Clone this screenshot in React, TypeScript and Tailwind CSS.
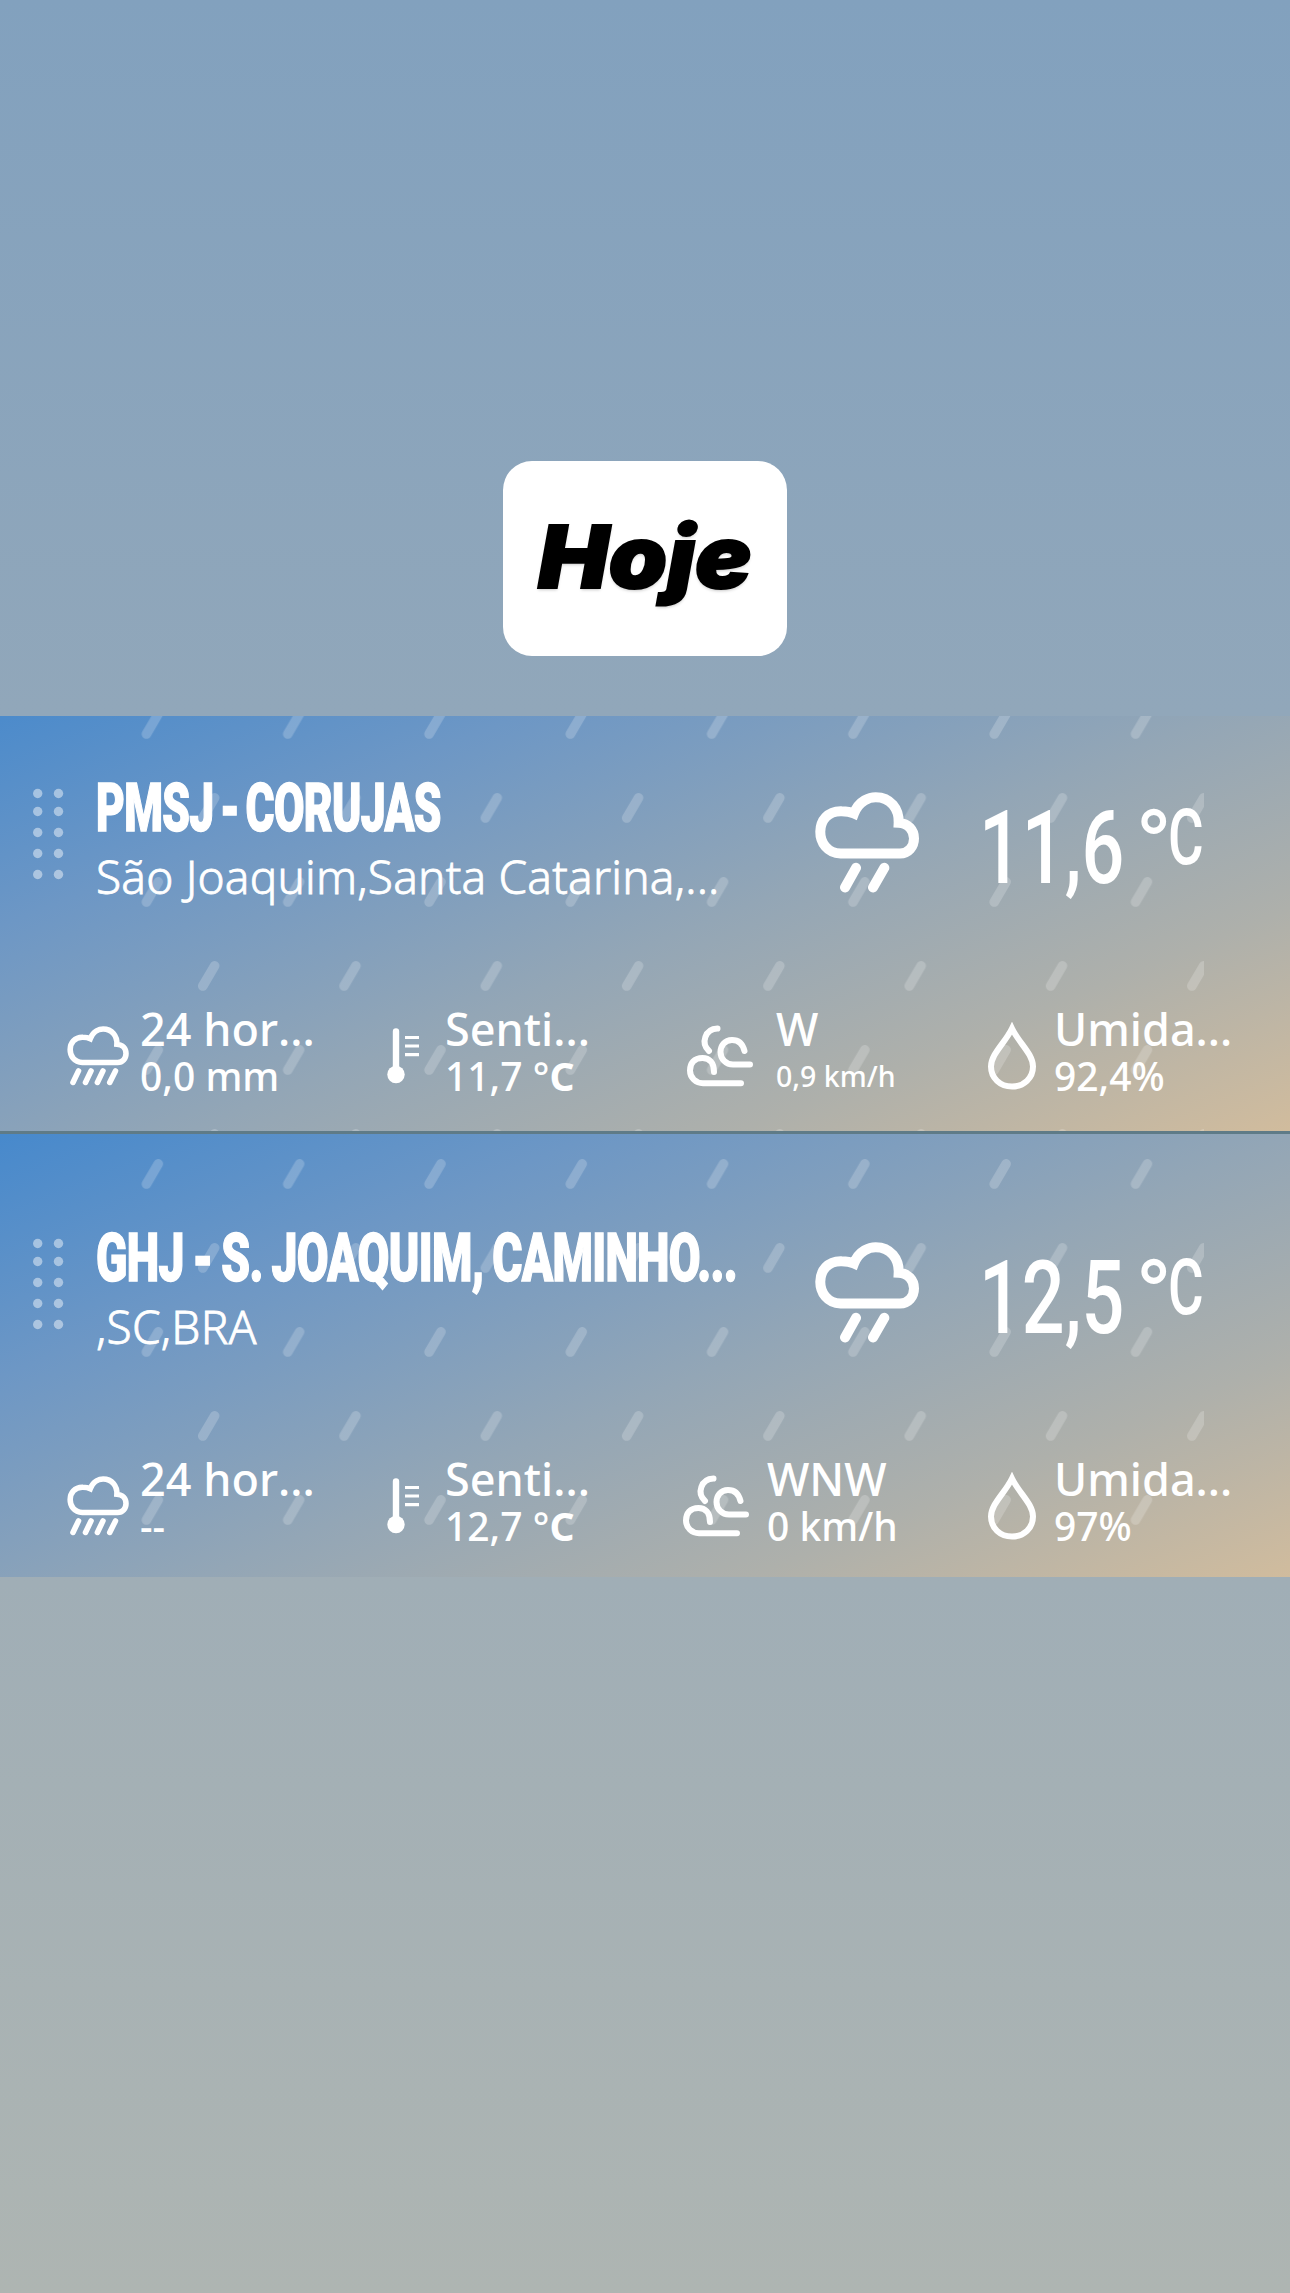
import type { ReactNode } from "react";
import clsx from "clsx";

const CLOUD =
  "M77 184C-5 181 -5 54 80 57Q102 57 117 64C132 24 165 15 182 15C226 15 253 50 251 92C280 94 297 114 297 139C297 164 280 184 255 184Z";

function RainPattern({ id }: { id: string }) {
  return (
    <svg className="absolute inset-0" width="1290" height="447">
      <defs>
        <pattern
          id={id}
          x="0"
          y="25"
          width="141.3"
          height="168"
          patternUnits="userSpaceOnUse"
        >
          <path
            d="M5.2 25L17 4.8M61.5 109L73.3 88.8"
            stroke="#fff"
            strokeOpacity="0.2"
            strokeWidth="9.6"
            strokeLinecap="round"
          />
        </pattern>
      </defs>
      <rect x="86" y="25" width="1118" height="422" fill={`url(#${id})`} />
    </svg>
  );
}

function DragHandle() {
  return (
    <svg className="mt-[10px] shrink-0" width="31" height="92">
      {[5.5, 23.5, 44.5, 65.5, 86.5].map((y) => (
        <g key={y} fill="#fff" fillOpacity="0.46">
          <circle cx="4.7" cy={y} r="4.7" />
          <circle cx="25.5" cy={y} r="4.7" />
        </g>
      ))}
    </svg>
  );
}

function RainCloud() {
  return (
    <svg
      className="mt-[14px] shrink-0"
      width="104"
      height="101"
      viewBox="0 0 312 302"
      fill="none"
      stroke="#fff"
      strokeWidth="30"
      strokeLinecap="round"
    >
      <path d={CLOUD} />
      <path d="M90 286L123 227M174 286L208 227" />
    </svg>
  );
}

function PrecipitationIcon() {
  return (
    <svg
      className="mt-[21px] shrink-0"
      width="62"
      height="60"
      viewBox="0 0 312 302"
      fill="none"
      stroke="#fff"
      strokeWidth="28"
      strokeLinecap="round"
    >
      <path d={CLOUD} />
      <path d="M30 284L58 226M93 284L121 226M153 284L181 226M215 284L244 226" />
    </svg>
  );
}

function ThermometerIcon() {
  return (
    <svg
      className="mt-[23px] shrink-0"
      width="32"
      height="56"
      fill="none"
      stroke="#fff"
    >
      <path d="M9 3.5V45" strokeWidth="6.4" strokeLinecap="round" />
      <circle cx="9" cy="46.5" r="8.7" fill="#fff" stroke="none" />
      <path d="M18 9.5H32M18 18H32M18 26.7H32" strokeWidth="3.2" />
    </svg>
  );
}

function WindIcon() {
  return (
    <svg
      className="mt-[20px] shrink-0"
      width="66"
      height="62"
      fill="none"
      stroke="#fff"
      strokeWidth="6"
      strokeLinecap="round"
    >
      <path d="M30.5 3.5C18 4 13.5 18 22 26" />
      <path d="M57.5 26C55.5 17.5 50 15 45 15C37.5 15 33.5 21 33.5 27C33.5 34 39 39.5 46 39.5H63" />
      <path d="M27 47C27 37 22 33 15.5 33C7 33 3 38.5 3 45.5C3 53 9 58.2 16 58.2H54" />
    </svg>
  );
}

function DropIcon() {
  return (
    <svg
      className="mt-[17px] shrink-0"
      width="48"
      height="68"
      fill="none"
      stroke="#fff"
      strokeWidth="6"
    >
      <path d="M24 6.5C17 21 3 32 3 44.5C3 56 12 64.5 24 64.5C36 64.5 45 56 45 44.5C45 32 31 21 24 6.5Z" />
    </svg>
  );
}

type MetricProps = {
  icon: ReactNode;
  label: string;
  value: ReactNode;
  gap: string;
  small?: boolean;
};

function Metric({ icon, label, value, gap, small }: MetricProps) {
  return (
    <div className={clsx("flex items-start font-medium whitespace-nowrap", gap)}>
      {icon}
      <div>
        <div className="mt-px text-[45px] leading-[46px] [font-kerning:none]">
          {label}
        </div>
        <div
          className={clsx(
            "mt-[2px] leading-[44px]",
            small ? "text-[28.5px]" : "text-[39px]",
          )}
        >
          {value}
        </div>
      </div>
    </div>
  );
}

type Station = {
  id: string;
  name: string;
  nameStyle: string;
  place: string;
  temp: string;
  rain: string;
  feels: string;
  windDir: string;
  wind: string;
  windSmall?: boolean;
  windPos: string;
  windGap: string;
  humidity: string;
};

const stations: Station[] = [
  {
    id: "corujas",
    name: "PMSJ - CORUJAS",
    nameStyle: "scale-x-[0.655] [word-spacing:-6px]",
    place: "São Joaquim,Santa Catarina,...",
    temp: "11,6",
    rain: "0,0 mm",
    feels: "11,7 °",
    windDir: "W",
    wind: "0,9 km/h",
    windSmall: true,
    windPos: "w-[301px]",
    windGap: "gap-[23px]",
    humidity: "92,4%",
  },
  {
    id: "caminhos",
    name: "GHJ - S. JOAQUIM, CAMINHO...",
    nameStyle: "scale-x-[0.683] [word-spacing:-3px]",
    place: ",SC,BRA",
    temp: "12,5",
    rain: "--",
    feels: "12,7 °",
    windDir: "WNW",
    wind: "0 km/h",
    windPos: "-ml-1 w-[305px]",
    windGap: "gap-[18px]",
    humidity: "97%",
  },
];

function StationCard({ station }: { station: Station }) {
  return (
    <div className="relative flex h-[447px] w-[1290px] shrink-0 flex-col overflow-hidden bg-[linear-gradient(158deg,#4789cc_0%,#6d97c5_25%,#93a6b6_54%,#aeb0ab_77%,#d1bc9d_100%)]">
      <RainPattern id={station.id} />
      <div className="relative flex h-[321px] items-start pt-[94px] pl-[33px]">
        <div className="w-16">
          <DragHandle />
        </div>
        <div className="w-[718px] whitespace-nowrap">
          <div
            className={clsx(
              "-ml-px origin-left font-[Roboto,sans-serif] text-[67.5px] leading-[60px] font-black tracking-[-1px] [-webkit-text-stroke:1.5px_white]",
              station.nameStyle,
            )}
          >
            {station.name}
          </div>
          <div className="mt-[13px] -ml-px text-[46px] leading-[50px] font-light tracking-[0.2px] [-webkit-text-stroke:0.8px_white]">
            {station.place}
          </div>
        </div>
        <RainCloud />
        <div className="ml-[60px] flex items-start pt-[30px] font-[Roboto,sans-serif] font-medium">
          <div className="w-[156px] origin-left scale-x-[0.735] text-[102.5px] leading-[80px]">
            {station.temp}
          </div>
          <div className="w-[33px] text-[100px] leading-[78px] font-normal">
            °
          </div>
          <div className="origin-left scale-x-[0.7] text-[78px] leading-[60px]">
            C
          </div>
        </div>
      </div>
      <div className="relative flex items-start pl-[67px]">
        <div className="w-[320px]">
          <Metric
            icon={<PrecipitationIcon />}
            label="24 hor..."
            value={station.rain}
            gap="gap-[11px]"
          />
        </div>
        <div className="w-[300px]">
          <Metric
            icon={<ThermometerIcon />}
            label="Senti..."
            value={
              <>
                {station.feels}
                <span className="font-bold">C</span>
              </>
            }
            gap="gap-[26px]"
          />
        </div>
        <div className={station.windPos}>
          <Metric
            icon={<WindIcon />}
            label={station.windDir}
            value={station.wind}
            gap={station.windGap}
            small={station.windSmall}
          />
        </div>
        <Metric
          icon={<DropIcon />}
          label="Umida..."
          value={station.humidity}
          gap="gap-[18px]"
        />
      </div>
    </div>
  );
}

export default function App() {
  return (
    <div className="flex h-[2293px] w-[1290px] flex-col overflow-hidden bg-[linear-gradient(180deg,#82a1be_0%,#91a7ba_31%,#a0aeb6_69%,#aeb5b2_100%)] font-['Noto_Sans',sans-serif] text-white">
      <div className="flex h-[716px] shrink-0 justify-center pt-[461px]">
        <div className="flex h-[195px] w-[284px] items-start justify-center rounded-[29px] bg-white">
          <span className="mt-[46px] scale-x-[1.08] font-[Inter,sans-serif] text-[87px] leading-[100px] font-black text-black italic [-webkit-text-stroke:2px_black] [text-shadow:0_2px_3px_rgba(0,0,0,0.22)]">
            Hoje
          </span>
        </div>
      </div>
      <div className="flex h-[415px] shrink-0 items-end overflow-hidden">
        <StationCard station={stations[0]} />
      </div>
      <div className="h-[3px] shrink-0 bg-[#5f7b87]" />
      <div className="flex h-[443px] shrink-0 items-start overflow-hidden">
        <StationCard station={stations[1]} />
      </div>
    </div>
  );
}
